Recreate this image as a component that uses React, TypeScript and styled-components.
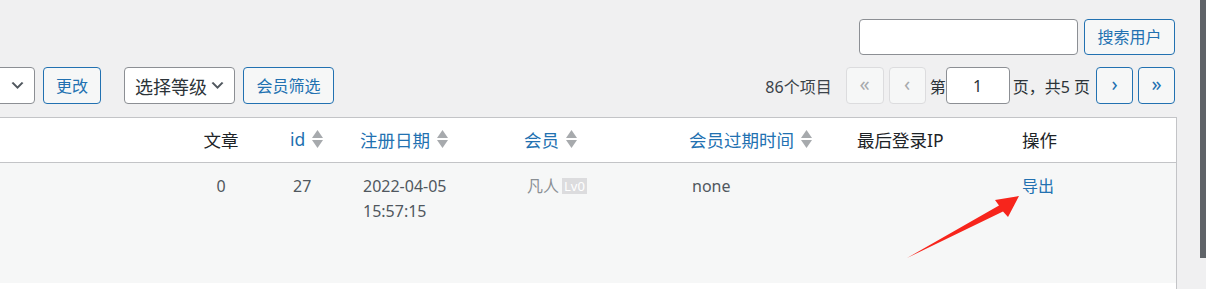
import React from "react";
import styled, { createGlobalStyle } from "styled-components";

const GlobalStyle = createGlobalStyle`
  html, body {
    margin: 0;
    padding: 0;
    background: #f0f0f1;
    overflow: hidden;
  }
  body {
    font-family: "Noto Sans", "Noto Sans CJK SC", sans-serif;
    color: #2c3338;
    font-size: 16px;
  }
  * { box-sizing: border-box; }
`;

const Page = styled.div`
  position: relative;
  width: 1206px;
  height: 289px;
  overflow: hidden;
`;

const Wrap = styled.div`
  margin-left: -60px;
  width: 1235px;
`;

const SearchBox = styled.div`
  display: flex;
  justify-content: flex-end;
  gap: 6px;
  padding-top: 19px;
`;

const TextInput = styled.input<{ $w: number; $h?: number; $center?: boolean }>`
  width: ${(p) => p.$w}px;
  height: ${(p) => p.$h ?? 37}px;
  border: 1px solid #8c8f94;
  border-radius: 4px;
  background: #fff;
  font-family: inherit;
  font-size: 16px;
  color: #2c3338;
  text-align: ${(p) => (p.$center ? "center" : "left")};
  padding: 0 8px;
  outline: none;
`;

const Button = styled.button<{ $w: number; $h?: number; $disabled?: boolean }>`
  width: ${(p) => p.$w}px;
  height: ${(p) => p.$h ?? 37}px;
  border: 1px solid ${(p) => (p.$disabled ? "#dcdcde" : "#2271b1")};
  border-radius: 4px;
  background: #f6f7f7;
  color: ${(p) => (p.$disabled ? "#a7aaad" : "#2271b1")};
  font-family: inherit;
  font-size: 16px;
  padding: 0;
  display: flex;
  align-items: center;
  justify-content: center;
  line-height: 1;
  white-space: nowrap;
`;

const PageButton = styled(Button)`
  font-size: 20px;
  padding-bottom: 3px;
`;

const TableNav = styled.div`
  display: flex;
  justify-content: space-between;
  align-items: center;
  margin-top: 12px;
  height: 37px;
`;

const NavLeft = styled.div`
  display: flex;
  align-items: center;
`;

const ActionGroup = styled.div<{ $ml?: number }>`
  display: flex;
  align-items: center;
  gap: 8px;
  margin-left: ${(p) => p.$ml ?? 0}px;
`;

const Select = styled.div<{ $w: number }>`
  width: ${(p) => p.$w}px;
  height: 37px;
  border: 1px solid #8c8f94;
  border-radius: 4px;
  background: #fff;
  display: flex;
  align-items: center;
  justify-content: space-between;
  padding: 0 8px 0 10px;
  font-size: 18px;
  white-space: nowrap;
  color: #2c3338;
  svg { flex: none; }
`;

const Pagination = styled.div`
  display: flex;
  align-items: center;
  font-size: 16px;
  color: #2c3338;
`;

const ItemCount = styled.span`
  margin-right: 14px;
  color: #3c434a;
`;

const PagingText = styled.span<{ $ml?: number; $mr?: number }>`
  margin-left: ${(p) => p.$ml ?? 0}px;
  margin-right: ${(p) => p.$mr ?? 0}px;
  color: #2c3338;
  white-space: pre;
`;

const Gap = styled.span<{ $w: number }>`
  display: inline-block;
  width: ${(p) => p.$w}px;
`;

const Table = styled.table`
  margin-top: 13px;
  width: 100%;
  border: 1px solid #c3c4c7;
  border-spacing: 0;
  table-layout: fixed;
  background: #fff;
`;

const Th = styled.th<{ $center?: boolean; $sortable?: boolean }>`
  height: 45px;
  padding: ${(p) => (p.$sortable ? "0" : "0 12px")};
  padding-bottom: 2px;
  text-align: ${(p) => (p.$center ? "center" : "left")};
  font-weight: 400;
  font-size: 17.5px;
  color: #1d2327;
  border-bottom: 1px solid #c3c4c7;
  vertical-align: middle;
`;

const SortLink = styled.a`
  display: flex;
  align-items: center;
  gap: 7px;
  padding: 0 9px;
  color: #2271b1;
  text-decoration: none;
`;

const Row = styled.tr<{ $alt?: boolean }>`
  background: ${(p) => (p.$alt ? "#f6f7f7" : "#fff")};
`;

const Td = styled.td<{ $center?: boolean }>`
  height: 120px;
  padding: 11px 12px;
  vertical-align: top;
  text-align: ${(p) => (p.$center ? "center" : "left")};
  font-size: 16px;
  line-height: 25px;
  color: #50575e;
`;

const SpacerTd = styled.td`
  height: 8px;
  padding: 0;
`;

const MemberName = styled.span`
  color: #8a8f94;
`;

const LevelBadge = styled.span`
  display: inline-block;
  margin-left: 3px;
  padding: 0 2px;
  height: 16px;
  line-height: 16px;
  font-size: 13px;
  background: #dcdcde;
  color: #fff;
  vertical-align: 1px;
`;

const ActionLink = styled.a`
  color: #2271b1;
  text-decoration: none;
`;

const Scrollbar = styled.div`
  position: absolute;
  top: 0;
  right: 0;
  width: 6px;
  height: 258px;
  background: #5f6368;
`;

const Overlay = styled.svg`
  position: absolute;
  left: 0;
  top: 0;
  pointer-events: none;
`;

const Chevron = ({ size = 17 }: { size?: number }) => (
  <svg width={size} height={size} viewBox="0 0 20 20">
    <path d="M5 6l5 5 5-5 2 1-7 7-7-7z" fill="#50575e" />
  </svg>
);

const SortArrows = () => (
  <svg width="11" height="18" viewBox="0 0 11 18">
    <polygon points="0,8 5.5,0 11,8" fill="#a7aaad" />
    <polygon points="0,10 11,10 5.5,18" fill="#a7aaad" />
  </svg>
);

type Col = { label: string; sortable?: boolean; center?: boolean; width: number };

const columns: Col[] = [
  { label: "", width: 220 },
  { label: "文章", center: true, width: 120 },
  { label: "id", sortable: true, width: 70 },
  { label: "注册日期", sortable: true, width: 164 },
  { label: "会员", sortable: true, width: 165 },
  { label: "会员过期时间", sortable: true, width: 165 },
  { label: "最后登录IP", width: 165 },
  { label: "操作", width: 166 },
];

export default function App() {
  return (
    <Page>
      <GlobalStyle />
      <Wrap>
        <SearchBox>
          <TextInput $w={219} $h={36} type="search" />
          <Button $w={91} $h={36}>搜索用户</Button>
        </SearchBox>

        <TableNav>
          <NavLeft>
            <ActionGroup>
              <Select $w={95}>
                <span />
                <Chevron />
              </Select>
              <Button $w={58}>更改</Button>
            </ActionGroup>
            <ActionGroup $ml={23}>
              <Select $w={111}>
                <span>选择等级</span>
                <Chevron />
              </Select>
              <Button $w={91}>会员筛选</Button>
            </ActionGroup>
          </NavLeft>

          <Pagination>
            <ItemCount>86个项目</ItemCount>
            <PageButton $w={38} $disabled>«</PageButton>
            <Gap $w={5} />
            <PageButton $w={37} $disabled>‹</PageButton>
            <PagingText $ml={4}>第</PagingText>
            <TextInput $w={64} $center defaultValue="1" />
            <PagingText $ml={3} $mr={6}>页，共5 页</PagingText>
            <PageButton $w={37}>›</PageButton>
            <Gap $w={5} />
            <PageButton $w={37}>»</PageButton>
          </Pagination>
        </TableNav>

        <Table>
          <colgroup>
            {columns.map((c, i) => (
              <col key={i} style={{ width: c.width }} />
            ))}
          </colgroup>
          <thead>
            <tr>
              {columns.map((c, i) => (
                <Th key={i} $center={c.center} $sortable={c.sortable}>
                  {c.sortable ? (
                    <SortLink href="#">
                      <span>{c.label}</span>
                      <SortArrows />
                    </SortLink>
                  ) : (
                    c.label
                  )}
                </Th>
              ))}
            </tr>
          </thead>
          <tbody>
            <Row $alt>
              <Td />
              <Td $center>0</Td>
              <Td>27</Td>
              <Td>
                2022-04-05
                <br />
                15:57:15
              </Td>
              <Td>
                <MemberName>凡人</MemberName>
                <LevelBadge>Lv0</LevelBadge>
              </Td>
              <Td>none</Td>
              <Td />
              <Td>
                <ActionLink href="#">导出</ActionLink>
              </Td>
            </Row>
            <Row>
              <SpacerTd colSpan={8} />
            </Row>
          </tbody>
        </Table>
      </Wrap>

      <Scrollbar />

      <Overlay width="1206" height="289" viewBox="0 0 1206 289">
        <polygon
          points="907,258 999,205.5 995,200 1019,196 1008,217 1003,211.5"
          fill="#f7251c"
        />
      </Overlay>
    </Page>
  );
}
